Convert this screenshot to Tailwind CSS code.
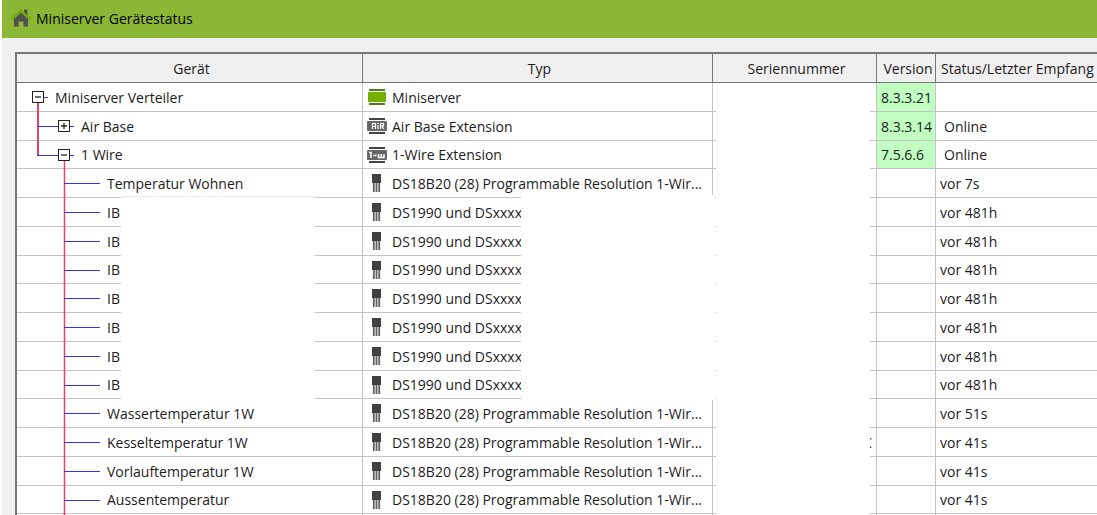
<!DOCTYPE html>
<html lang="de">
<head>
<meta charset="utf-8">
<title>Miniserver Gerätestatus</title>
<script src="https://cdn.jsdelivr.net/npm/@tailwindcss/browser@4"></script>
</head>
<body class="h-screen overflow-hidden bg-white pl-[2px] font-['Open_Sans','Noto_Sans',sans-serif] text-[14px] text-[#1c1c1c]">
<div class="flex h-full flex-col bg-[#f0f0f0]">
  <header class="flex h-[38px] shrink-0 items-center gap-[5px] bg-[#8ab836] pb-[2px] pl-[9px] text-black">
    <svg class="size-5" viewBox="0 0 20 20" aria-hidden="true">
      <path d="M13 1.500h3.500v6H13z" fill="#505050"/>
      <path d="M3 10 10 4l7 6v8.500h-4.500v-5h-5v5H3z" fill="#505050"/>
      <path d="M0 10.500 10 1l10 9.500-1.500 2L10 4.800 1.500 12.500z" fill="#72a80c"/>
    </svg>
    <h1>Miniserver Gerätestatus</h1>
  </header>
  <main class="relative mt-[14px] ml-[13px] min-h-0 flex-1 overflow-hidden border-t-2 border-l-2 border-[#767676] bg-white">
    <table class="w-full table-fixed border-separate border-spacing-0 whitespace-nowrap">
      <colgroup><col class="w-[346px]"><col class="w-[350px]"><col class="w-[164px]"><col class="w-[59px]"><col></colgroup>
      <thead>
        <tr class="h-[29px] bg-[#f0f0f0]">
          <th class="border-r border-b border-[#767676] p-0 pl-[4px] font-normal">Gerät</th>
          <th class="border-r border-b border-[#767676] p-0 pl-[4px] font-normal">Typ</th>
          <th class="border-r border-b border-[#767676] p-0 pl-[4px] font-normal">Seriennummer</th>
          <th class="border-r border-b border-[#767676] p-0 pl-[4px] font-normal">Version</th>
          <th class="border-b border-[#767676] p-0 pl-[5px] text-left font-normal">Status/Letzter Empfang</th>
        </tr>
      </thead>
      <tbody id="rows"></tbody>
    </table>
    <div class="absolute top-[142px] left-[104px] h-[204px] w-[194px] border-t border-[#ececec] bg-white"></div>
    <div class="absolute top-[141px] left-[504px] h-[205px] w-[194px] bg-white"></div>
    <div class="absolute top-[30px] bottom-0 left-[699px] w-[154px] bg-white"></div>
  </main>
</div>
<script>
const lines = {
  root: '<path d="M27 14.500h4" stroke="#3030ff"/><path d="M21 20v9" stroke="#e8406a" stroke-width="2"/>',
  branch: '<path d="M21 0v29" stroke="#e8406a" stroke-width="2"/><path d="M21 14.500h21M53 14.500h4" stroke="#3030ff"/>',
  last: '<path d="M21 0v14" stroke="#e8406a" stroke-width="2"/><path d="M20 14.500h22M53 14.500h4" stroke="#3030ff"/><path d="M47.500 20v9" stroke="#e8406a" stroke-width="1.500"/>',
  leaf: '<path d="M47.500 0v29" stroke="#e8406a" stroke-width="1.500"/><path d="M47 14.500h36" stroke="#3030ff"/>'
};
const pad = { root: 'pl-[15px]', branch: 'pl-[41px]', last: 'pl-[41px]', leaf: 'pl-[90px]' };
const module = (rail, body, x, w, glyph) =>
  `<rect x="2" y="1" width="16" height="2" fill="${rail}"/><rect x="2" y="15" width="16" height="2" fill="${rail}"/><rect x="${x}" y="4" width="${w}" height="10" rx="1" fill="${body}"/>${glyph}`;
const icons = {
  mini: module('#4f7d10', '#74b000', 1, 18, ''),
  air: module('#444', '#686868', 0, 20, '<path d="M5.500 12V6.500h3V12M5.500 9.500h3M11 6v1M11 8v4M13.500 12V6.500h3V9h-3M15 9l1.500 3" fill="none" stroke="#fff" stroke-width="1.200"/>'),
  wire: module('#444', '#686868', 0, 20, '<path d="M2 6.500h2V12M6.500 9.500h3M11.500 8v3.500h5.500V8M14.200 8v3.500" fill="none" stroke="#fff" stroke-width="1.500"/>'),
  sensor: '<rect x="5" y="0" width="9" height="9" fill="#404040"/><path d="M6.800 9v9M9.500 9v9M12.200 9v9" stroke="#606060" stroke-width="1.800"/>'
};
const ds18 = 'DS18B20 (28) Programmable Resolution 1-Wir...';
const ib = ['leaf', 'IB', 'sensor', 'DS1990 und DSxxxx', '', 'vor 481h'];
const data = [
  ['root', 'Miniserver Verteiler', 'mini', 'Miniserver', '8.3.3.21', ''],
  ['branch', 'Air Base', 'air', 'Air Base Extension', '8.3.3.14', 'Online'],
  ['last', '1 Wire', 'wire', '1-Wire Extension', '7.5.6.6', 'Online'],
  ['leaf', 'Temperatur Wohnen', 'sensor', ds18, '', 'vor 7s'],
  ib, ib, ib, ib, ib, ib, ib,
  ['leaf', 'Wassertemperatur 1W', 'sensor', ds18, '', 'vor 51s'],
  ['leaf', 'Kesseltemperatur 1W', 'sensor', ds18, '', 'vor 41s', 'C'],
  ['leaf', 'Vorlauftemperatur 1W', 'sensor', ds18, '', 'vor 41s'],
  ['leaf', 'Aussentemperatur', 'sensor', ds18, '', 'vor 41s'],
  ['leaf', '', 'sensor', '', '', '']
];
document.getElementById('rows').innerHTML = data.map(([kind, name, icon, type, version, status, serial = '']) => `
<tr class="h-[29px] nth-[4n+3]:h-[28px]">
  <td class="relative border-r border-b border-[#c4c4c4] p-0">
    <svg class="absolute top-0 left-0 h-[29px] w-[92px]" viewBox="0 0 92 29" aria-hidden="true">${lines[kind]}</svg>
    <div class="flex items-center ${pad[kind]}">${kind === 'leaf' ? '' : `<button aria-label="${name}" aria-expanded="${kind !== 'branch'}" class="relative mr-[11px] size-[12px] border border-[#222] bg-white"><svg class="size-[10px]" viewBox="0 0 10 10" aria-hidden="true"><path d="M2 5h6${kind === 'branch' ? 'M5 2v6' : ''}" stroke="#222" stroke-width="1.300"/></svg></button>`}<span>${name}</span></div>
  </td>
  <td class="border-r border-b border-[#c4c4c4] p-0">
    <div class="flex items-center gap-[5px] pl-[4px]"><svg class="h-[18px] w-[20px] shrink-0" viewBox="0 0 20 18" aria-hidden="true">${icons[icon]}</svg><span>${type}</span></div>
  </td>
  <td class="border-r border-b border-[#c4c4c4] p-0 pr-[4px] text-right">${serial}</td>
  <td class="border-r border-b border-[#c4c4c4] p-0 pl-[4px] ${version ? 'bg-[#c0ffc0]' : ''}">${version}</td>
  <td class="border-b border-[#c4c4c4] p-0 ${status === 'Online' ? 'pl-[8px]' : 'pl-[4px]'}">${status}</td>
</tr>`).join('');
</script>
</body>
</html>
